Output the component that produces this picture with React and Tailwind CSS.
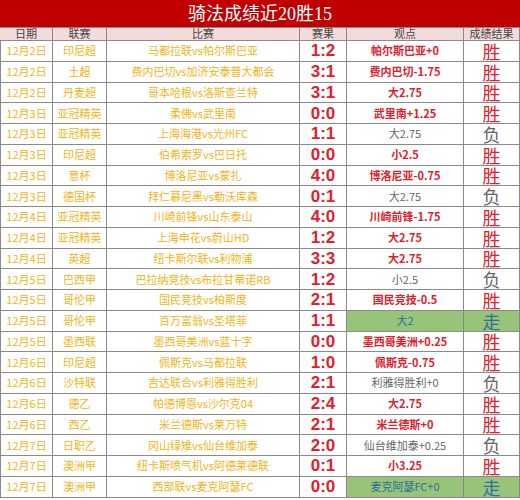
import React from "react";

const rows = [
  ["12月2日", "印尼超", "马都拉联vs帕尔斯巴亚", "1:2", "帕尔斯巴亚+0", "w"],
  ["12月2日", "土超", "费内巴切vs加济安泰普大都会", "3:1", "费内巴切-1.75", "w"],
  ["12月2日", "丹麦超", "哥本哈根vs洛斯查兰特", "3:1", "大2.75", "w"],
  ["12月3日", "亚冠精英", "柔佛vs武里南", "0:0", "武里南+1.25", "w"],
  ["12月3日", "亚冠精英", "上海海港vs光州FC", "1:1", "大2.75", "l"],
  ["12月3日", "印尼超", "伯希索罗vs巴日托", "0:0", "小2.5", "w"],
  ["12月3日", "意杯", "博洛尼亚vs蒙扎", "4:0", "博洛尼亚-0.75", "w"],
  ["12月3日", "德国杯", "拜仁慕尼黑vs勒沃库森", "0:1", "大2.75", "l"],
  ["12月4日", "亚冠精英", "川崎前锋vs山东泰山", "4:0", "川崎前锋-1.75", "w"],
  ["12月4日", "亚冠精英", "上海申花vs蔚山HD", "1:2", "大2.75", "w"],
  ["12月4日", "英超", "纽卡斯尔联vs利物浦", "3:3", "大2.75", "w"],
  ["12月5日", "巴西甲", "巴拉纳竞技vs布拉甘蒂诺RB", "1:2", "小2.5", "l"],
  ["12月5日", "哥伦甲", "国民竞技vs柏斯度", "2:1", "国民竞技-0.5", "w"],
  ["12月5日", "哥伦甲", "百万富翁vs圣塔菲", "1:1", "大2", "d"],
  ["12月5日", "墨西联", "墨西哥美洲vs蓝十字", "0:0", "墨西哥美洲+0.25", "w"],
  ["12月6日", "印尼超", "佩斯克vs马都拉联", "1:0", "佩斯克-0.75", "w"],
  ["12月6日", "沙特联", "吉达联合vs利雅得胜利", "2:1", "利雅得胜利+0", "l"],
  ["12月6日", "德乙", "帕德博恩vs沙尔克04", "2:4", "大2.75", "w"],
  ["12月6日", "西乙", "米兰德斯vs莱万特", "2:1", "米兰德斯+0", "w"],
  ["12月7日", "日职乙", "冈山绿雉vs仙台维加泰", "2:0", "仙台维加泰+0.25", "l"],
  ["12月7日", "澳洲甲", "纽卡斯喷气机vs阿德莱德联", "0:1", "小3.25", "w"],
  ["12月7日", "澳洲甲", "西部联vs麦克阿瑟FC", "0:0", "麦克阿瑟FC+0", "d"],
];

const sans = "font-['Noto_Sans_CJK_SC',sans-serif]";
const cell = "flex items-center justify-center border-r border-b border-[#8a8a8a] h-[20.75px] overflow-visible whitespace-nowrap";

export default function App() {
  return (
    <div className={`w-[520px] h-[500px] bg-white ${sans}`}>
      <div className="h-[28px] bg-[#c00000] flex items-center justify-center text-white text-[18px] leading-none font-['Liberation_Serif','Noto_Sans_CJK_SC',serif] border-b border-[#8a8a8a]">
        骑法成绩近20胜15
      </div>
      <div className="grid grid-cols-[53px_54px_193px_47px_117px_56px]">
        {["日期", "联赛", "比赛", "赛果", "观点", "成绩结果"].map((h) => (
          <div key={h} className="flex items-center justify-center h-[13px] bg-[#f2dcdb] border-r border-b border-[#8a8a8a] text-[11px] leading-none text-[#444] font-['Liberation_Serif','Noto_Sans_CJK_SC',serif]">
            {h}
          </div>
        ))}
        {rows.map((r, i) => {
          const [date, league, match, score, view, res] = r;
          const draw = res === "d";
          const loss = res === "l";
          return (
            <React.Fragment key={i}>
              <div className={`${cell} border-l text-[11px] leading-none text-[#f2b418]`}>{date}</div>
              <div className={`${cell} text-[11px] leading-none text-[#f2b418]`}>{league}</div>
              <div className={`${cell} text-[11px] leading-none text-[#f2b418]`}>{match}</div>
              <div className={`${cell} text-[17px] leading-none font-bold text-[#e0202a] font-['Liberation_Sans',sans-serif]`}>{score}</div>
              <div className={`${cell} text-[11px] leading-none ${draw ? "bg-[#98c47a] text-[#2a6f9a]" : loss ? "text-[#666]" : "font-bold text-[#e0202a]"}`}>{view}</div>
              <div className={`${cell} text-[18px] leading-none ${draw ? "bg-[#98c47a] text-[#2f6f98]" : loss ? "text-[#666]" : "text-[#e0202a]"}`}>
                {draw ? "走" : loss ? "负" : "胜"}
              </div>
            </React.Fragment>
          );
        })}
      </div>
    </div>
  );
}
